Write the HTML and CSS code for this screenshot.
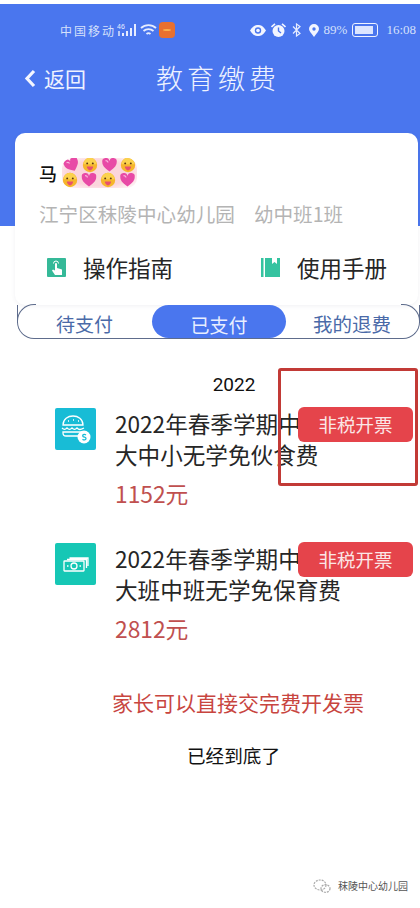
FILE: index.html
```html
<!DOCTYPE html>
<html lang="zh">
<head>
  <meta charset="UTF-8" />
  <meta name="viewport" content="width=device-width, initial-scale=1.0"/>
  <title>教育缴费</title>
  <link rel="stylesheet" href="styles.css">
</head>
<body>
  <svg class="defs" width="0" height="0">
    <symbol id="face" viewBox="0 0 20 20">
      <circle cx="10" cy="10" r="9" fill="#f6b62c"/>
      <path d="M2 9a8 8 0 0 1 16 0" fill="#fbd24e"/>
      <circle cx="6.5" cy="8" r="1.2" fill="#5b3410"/>
      <circle cx="13.5" cy="8" r="1.2" fill="#5b3410"/>
      <path d="M6 12h8c0 2-2 5-4 5s-4-3-4-5z" fill="#e8506e"/>
    </symbol>
    <symbol id="heart" viewBox="0 0 20 20">
      <path d="M10 18C3 13 1 10 1 6.500A4.500 4.500 0 0 1 10 5a4.500 4.500 0 0 1 9 1.500C19 10 17 13 10 18z" fill="#e84aa6"/>
      <path d="M5 4.500c2 0 3 1 3 2.500" stroke="#f9b4dc" stroke-width="1.500" fill="none"/>
    </symbol>
  </svg>

  <header class="top">
    <div class="status">
      <div class="status-left">
        <span class="carrier">中国移动</span>
        <svg class="sig" width="23" height="14" viewBox="0 0 23 14">
          <text x="0" y="6" class="sig-text">46</text>
          <rect x="1" y="8" width="2" height="5" fill="#b9c9f7"/>
          <rect x="5" y="10" width="2" height="3" fill="#e6ecff"/>
          <rect x="9" y="8" width="2" height="5" fill="#e6ecff"/>
          <rect x="13" y="5" width="2" height="8" fill="#e6ecff"/>
          <rect x="17" y="1" width="2" height="12" fill="#e6ecff"/>
        </svg>
        <svg width="18" height="14" viewBox="0 0 18 14" fill="none" stroke="#e6ecff" stroke-width="1.800">
          <path d="M1 5a11 11 0 0 1 15 0"/>
          <path d="M3.500 8a7.500 7.500 0 0 1 10 0"/>
          <path d="M6.500 11a3 3 0 0 1 4 0"/>
        </svg>
        <span class="app-dot"><span class="app-dash"></span></span>
      </div>
      <div class="status-right">
        <svg class="eye" width="16" height="11" viewBox="0 0 16 11">
          <path d="M0 5.500C3 1 5 0 8 0s5 1 8 5.500C13 10 11 11 8 11S3 10 0 5.500z" fill="#f2f5ff"/>
          <circle cx="8" cy="5.500" r="3.200" fill="#4a76ee"/>
          <circle cx="8" cy="5.500" r="1.800" fill="#f2f5ff"/>
        </svg>
        <svg class="alarm" width="15" height="15" viewBox="0 0 15 15">
          <circle cx="7.500" cy="8" r="6" fill="#f2f5ff"/>
          <path d="M7.500 4.500V8l2.500 2" stroke="#4a76ee" stroke-width="1.400" fill="none"/>
          <path d="M0.500 4L4 0.800M14.500 4L11 0.800" stroke="#f2f5ff" stroke-width="1.600"/>
        </svg>
        <svg class="bt" width="9" height="14" viewBox="0 0 9 14" fill="none" stroke="#e6ecff" stroke-width="1.200">
          <path d="M1 3.500l7 7L4.500 13V1L8 3.500l-7 7"/>
        </svg>
        <svg class="loc" width="10" height="13" viewBox="0 0 10 13">
          <path d="M5 13C2 9 0 7 0 5a5 5 0 0 1 10 0c0 2-2 4-5 8z" fill="#f2f5ff"/>
          <circle cx="5" cy="5" r="1.700" fill="#4a76ee"/>
        </svg>
        <span class="pct">89%</span>
        <span class="batt"><span class="batt-fill"></span></span>
        <span class="clock">16:08</span>
      </div>
    </div>
    <div class="nav">
      <div class="back">
        <svg width="12" height="19" viewBox="0 0 12 19" fill="none" stroke="#f4f6ff" stroke-width="3.200">
          <path d="M10 2L3 9.500 10 17"/>
        </svg>
        <span>返回</span>
      </div>
      <div class="title">教育缴费</div>
    </div>
  </header>

  <section class="card">
    <div class="who">
      <span class="who-name">马</span>
      <svg class="emoji" width="75" height="30" viewBox="0 0 75 30">
        <use href="#heart" x="2" y="-1" width="16" height="16" transform="rotate(-25 10 7)"/>
        <use href="#face" x="20" y="-1" width="16" height="16"/>
        <use href="#heart" x="39" y="-1" width="17" height="16"/>
        <use href="#face" x="58" y="-1" width="16" height="16"/>
        <use href="#face" x="0" y="14" width="16" height="16"/>
        <use href="#heart" x="18" y="14" width="18" height="16"/>
        <use href="#face" x="38" y="14" width="16" height="16"/>
        <use href="#heart" x="57" y="14" width="17" height="16"/>
      </svg>
    </div>
    <div class="school">
      <span>江宁区秣陵中心幼儿园</span>
      <span>幼中班1班</span>
    </div>
    <div class="links">
      <div class="link">
        <svg width="19" height="19" viewBox="0 0 19 19">
          <rect width="19" height="19" rx="1" fill="#35b998"/>
          <path d="M6.500 5.500a2.500 2.500 0 0 1 5 0" stroke="#fff" fill="none"/>
          <path d="M8 6v6.500l-2-1-1 1 3 4.500h7v-5.500l-5-1.500V6a1 1 0 0 0-2 0z" fill="#fff"/>
        </svg>
        <span>操作指南</span>
      </div>
      <div class="link">
        <svg width="19" height="19" viewBox="0 0 19 19">
          <path d="M0 0h2.500v19H0zM4 0h7v6l2.500-2L16 6V0h3v19H4z" fill="#35c3a0"/>
        </svg>
        <span>使用手册</span>
      </div>
    </div>
  </section>

  <nav class="tabs">
    <span class="tab tab-a">待支付</span>
    <span class="tab tab-on">已支付</span>
    <span class="tab tab-c">我的退费</span>
  </nav>

  <div class="year">2022</div>

  <div class="item">
    <span class="pic pic-blue">
      <svg width="33" height="31" viewBox="0 0 33 31" fill="none" stroke="#fff" stroke-width="1.300">
        <path d="M4 11C4 5 9 2 14 2s10 3 10 9z"/>
        <path d="M9 7h1M14 6h1M19 7h1"/>
        <path d="M3 14c2 2 3 2 5 0 2 2 3 2 5 0 2 2 3 2 5 0 2 2 3 2 7 0"/>
        <path d="M4 18h20v1c0 2-1 3-3 3H7c-2 0-3-1-3-3z"/>
        <circle cx="25" cy="23" r="6.500" fill="#fff" stroke="none"/>
        <path d="M27 21c-2-1.500-4 0-3 1.500 1 1 3 .5 3 2s-2 2-3.500 .7" stroke="#18bcd6"/>
      </svg>
    </span>
    <div class="info">
      <div class="name">2022年春季学期中</div>
      <div class="name">大中小无学免伙食费</div>
      <div class="price">1152元</div>
    </div>
    <span class="bill">非税开票</span>
  </div>

  <div class="item">
    <span class="pic pic-green">
      <svg width="26" height="15" viewBox="0 0 26 15" fill="none" stroke="#fff" stroke-width="1.300">
        <rect x="1" y="4" width="20" height="10" rx="0.500"/>
        <path d="M4 2.500h19.500V11M6.500 1h18.500v8"/>
        <circle cx="11" cy="9" r="3"/>
        <path d="M4 9h1.500M16.500 9h1.500"/>
      </svg>
    </span>
    <div class="info">
      <div class="name">2022年春季学期中</div>
      <div class="name">大班中班无学免保育费</div>
      <div class="price">2812元</div>
    </div>
    <span class="bill">非税开票</span>
  </div>

  <p class="note">家长可以直接交完费开发票</p>
  <p class="end">已经到底了</p>

  <div class="mark-box"></div>

  <div class="wm">
    <svg width="18" height="15" viewBox="0 0 18 15" fill="none" stroke="#a9a9a9" stroke-width="1.200" stroke-dasharray="2 1">
      <ellipse cx="7" cy="6" rx="6" ry="5"/>
      <ellipse cx="12.500" cy="9.500" rx="4.500" ry="3.800"/>
    </svg>
    <span>秣陵中心幼儿园</span>
  </div>
</body>
</html>
```

FILE: styles.css
```css
* {
  box-sizing: border-box;
}

html, body {
  height: 100%;
}

body {
  margin: 0;
  padding-top: 4px;
  position: relative;
  overflow: hidden;
  background: #fff;
  font-family: "Noto Sans CJK SC", "Noto Sans", sans-serif;
  color: #222;
}

.defs {
  position: absolute;
}

.top {
  display: flow-root;
  height: 222px;
  background: #4a76ee;
  color: #eef2ff;
}

.status {
  display: flex;
  justify-content: space-between;
  align-items: center;
  height: 24px;
  margin-top: 14px;
  padding: 0 4px 0 60px;
}

.status-left,
.status-right {
  display: flex;
  align-items: center;
}

.carrier {
  font-size: 12px;
  letter-spacing: 2px;
  color: #d5e0fb;
  margin-right: 1px;
}

.sig-text {
  font-size: 7px;
  font-family: "Liberation Sans", sans-serif;
  fill: #e6ecff;
}

.app-dot {
  display: flex;
  align-items: center;
  justify-content: center;
  width: 16px;
  height: 16px;
  margin-left: 1px;
  background: #e8702f;
  border-radius: 4px;
}

.app-dash {
  width: 8px;
  height: 8px;
  border-radius: 50%;
  background: #f9b04e;
  border-top: 3px solid #e8702f;
  border-bottom: 3px solid #e8702f;
}

.status-right {
  gap: 5px;
}

.bt {
  margin-left: 1px;
}

.loc {
  margin-left: 3px;
}

.pct,
.clock {
  font-family: "Liberation Serif", serif;
  font-size: 13px;
  color: #d5e0fb;
}

.batt {
  display: flex;
  align-items: center;
  width: 26px;
  height: 14px;
  padding: 2px;
  border: 1.500px solid #eef2ff;
  border-radius: 3px;
}

.batt-fill {
  width: 88%;
  height: 100%;
  background: #dbe5ff;
}

.clock {
  margin-left: 3px;
}

.nav {
  display: flex;
  align-items: center;
  height: 38px;
  margin-top: 17px;
  padding-left: 24px;
}

.back {
  display: flex;
  align-items: center;
  gap: 8px;
  width: 132px;
  font-size: 21px;
  line-height: 30px;
}

.title {
  font-size: 27px;
  line-height: 38px;
  letter-spacing: 4px;
  font-weight: 300;
}

.card {
  height: 172px;
  margin: -93px 2px 0 15px;
  padding: 24px 24px 0;
  position: relative;
  background: #fff;
  border-radius: 10px;
  box-shadow: 0 1px 4px rgba(60, 70, 100, 0.08);
}

.who {
  display: flex;
  align-items: center;
  height: 32px;
}

.who-name {
  font-size: 18px;
  line-height: 32px;
  color: #111;
  margin-right: 5px;
  font-weight: 500;
}

.emoji {
  flex: none;
  background: radial-gradient(ellipse at center, #fbd5dc 60%, #fff 100%);
  border-radius: 10px;
}

.school {
  display: flex;
  gap: 19px;
  margin-top: 11px;
  font-size: 19.600px;
  line-height: 28px;
  color: #b4b4b4;
}

.links {
  display: grid;
  grid-template-columns: 214px 1fr;
  margin-top: 24px;
  padding-left: 8px;
}

.link {
  display: flex;
  align-items: center;
  gap: 17px;
  font-size: 22.500px;
  line-height: 30px;
  color: #262626;
}

.tabs {
  display: flex;
  align-items: center;
  height: 34px;
  margin-left: 17px;
  border: 1px solid #5e6c8c;
  border-top: 0;
  border-radius: 0 0 17px 17px;
  position: relative;
  font-size: 19px;
  line-height: 33px;
  color: #4a6aa8;
}

.tabs::before,
.tabs::after {
  content: "";
  position: absolute;
  top: -1px;
  width: 18px;
  height: 18px;
  border-top: 1px solid #5e6c8c;
}

.tabs::before {
  left: -1px;
  border-left: 1px solid #5e6c8c;
  border-radius: 17px 0 0 0;
}

.tabs::after {
  right: -1px;
  border-right: 1px solid #5e6c8c;
  border-radius: 0 17px 0 0;
}

.tab {
  padding-top: 3px;
}

.tab-a {
  margin-left: 38px;
  width: 96px;
}

.tab-on {
  width: 134px;
  height: 33px;
  text-align: center;
  background: #4a76ee;
  color: #e8eeff;
  border-radius: 17px;
}

.tab-c {
  margin-left: 27px;
  font-size: 19.500px;
  white-space: nowrap;
}

.year {
  margin-top: 34px;
  padding-left: 48px;
  text-align: center;
  font-family: "Roboto", sans-serif;
  font-size: 19px;
  line-height: 24px;
  color: #111;
}

.item {
  display: flex;
  align-items: flex-start;
  gap: 19px;
  height: 135px;
  margin-top: 11px;
  padding-left: 55px;
  position: relative;
}

.item + .item {
  margin-top: 0;
}

.pic {
  display: flex;
  align-items: center;
  justify-content: center;
  flex: none;
  width: 41px;
  height: 42px;
  border-radius: 2px;
}

.pic-blue {
  background: #18bcd6;
}

.pic-green {
  background: #16c7b5;
}

.name {
  font-size: 22.600px;
  line-height: 31px;
  color: #262626;
  white-space: nowrap;
}

.price {
  margin-top: 8px;
  font-size: 22.800px;
  line-height: 32px;
  color: #c0504f;
}

.bill {
  position: absolute;
  top: -1px;
  left: 298px;
  width: 115px;
  height: 35px;
  line-height: 35px;
  text-align: center;
  background: #e5444b;
  color: #fbe6e6;
  border-radius: 6px;
  font-size: 18.500px;
}

.note {
  margin: 9px 0 0;
  padding-left: 112px;
  font-size: 21px;
  line-height: 30px;
  color: #c8453f;
}

.end {
  margin: 23px 0 0;
  padding-left: 187px;
  font-size: 18.600px;
  line-height: 30px;
  color: #111;
}

.mark-box {
  position: absolute;
  left: 278px;
  top: 368px;
  width: 140px;
  height: 118px;
  border: 3px solid #c23a36;
  border-radius: 3px;
}

.wm {
  position: absolute;
  left: 313px;
  top: 878px;
  display: flex;
  align-items: center;
  gap: 7px;
  font-size: 10px;
  line-height: 16px;
  color: #555;
}
```
